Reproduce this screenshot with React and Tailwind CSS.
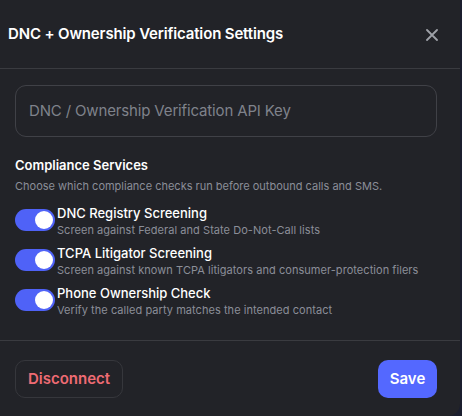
import React from "react";

function Toggle() {
  return (
    <div className="w-[40px] h-[22px] rounded-full bg-[#4f62f7] flex items-center justify-end pr-[2px] shrink-0">
      <div className="w-[18px] h-[18px] rounded-full bg-white" />
    </div>
  );
}

function Row({ title, desc }) {
  return (
    <div className="flex items-start gap-[2px]">
      <div className="pt-[4px]"><Toggle /></div>
      <div className="flex flex-col">
        <div className="text-[13px] leading-[16px] text-white font-medium">{title}</div>
        <div className="text-[11px] leading-[16px] text-[#8b8e98] mt-[1px] tracking-[0.05px]">{desc}</div>
      </div>
    </div>
  );
}

export default function App() {
  return (
    <div className="w-[462px] h-[416px] bg-[#1b1e2e] overflow-hidden" style={{ fontFamily: "Inter, 'Noto Sans', sans-serif" }}>
      <div className="w-[460px] h-[416px] bg-[#222328] rounded-br-[12px] flex flex-col">
        <div className="h-[69px] flex items-center justify-between pl-[8px] pr-[22px] border-b border-[#3a3b40]">
          <div className="text-[15px] font-semibold text-white tracking-[-0.15px]">DNC + Ownership Verification Settings</div>
          <svg width="12" height="12" viewBox="0 0 12 12" className="mt-[2px]">
            <path d="M1 1L11 11M11 1L1 11" stroke="#9ea1a8" strokeWidth="1.8" strokeLinecap="round" />
          </svg>
        </div>
        <div className="flex-1 pl-[15px] pr-[23px] pt-[16px]">
          <div className="h-[52px] rounded-[11px] border border-[#404147] flex items-center px-[13px]">
            <span className="text-[15px] text-[#7f828b] tracking-[-0.15px]">DNC / Ownership Verification API Key</span>
          </div>
          <div className="mt-[20px] text-[13px] font-semibold text-white leading-[16px]">Compliance Services</div>
          <div className="mt-[6px] text-[11px] text-[#8b8e98] leading-[14px]">Choose which compliance checks run before outbound calls and SMS.</div>
          <div className="mt-[12px] flex flex-col gap-[7px]">
            <Row title="DNC Registry Screening" desc="Screen against Federal and State Do-Not-Call lists" />
            <Row title="TCPA Litigator Screening" desc="Screen against known TCPA litigators and consumer-protection filers" />
            <Row title="Phone Ownership Check" desc="Verify the called party matches the intended contact" />
          </div>
        </div>
        <div className="h-[76px] border-t border-[#3a3b40] flex items-start justify-between pl-[15px] pr-[23px] pt-[19px]">
          <button className="h-[38px] px-[12px] rounded-[10px] border border-[#36373c] text-[15px] font-semibold text-[#ee6b73]">Disconnect</button>
          <button className="h-[38px] w-[59px] rounded-[10px] bg-[#5468ff] text-[15px] font-semibold text-white">Save</button>
        </div>
      </div>
    </div>
  );
}
